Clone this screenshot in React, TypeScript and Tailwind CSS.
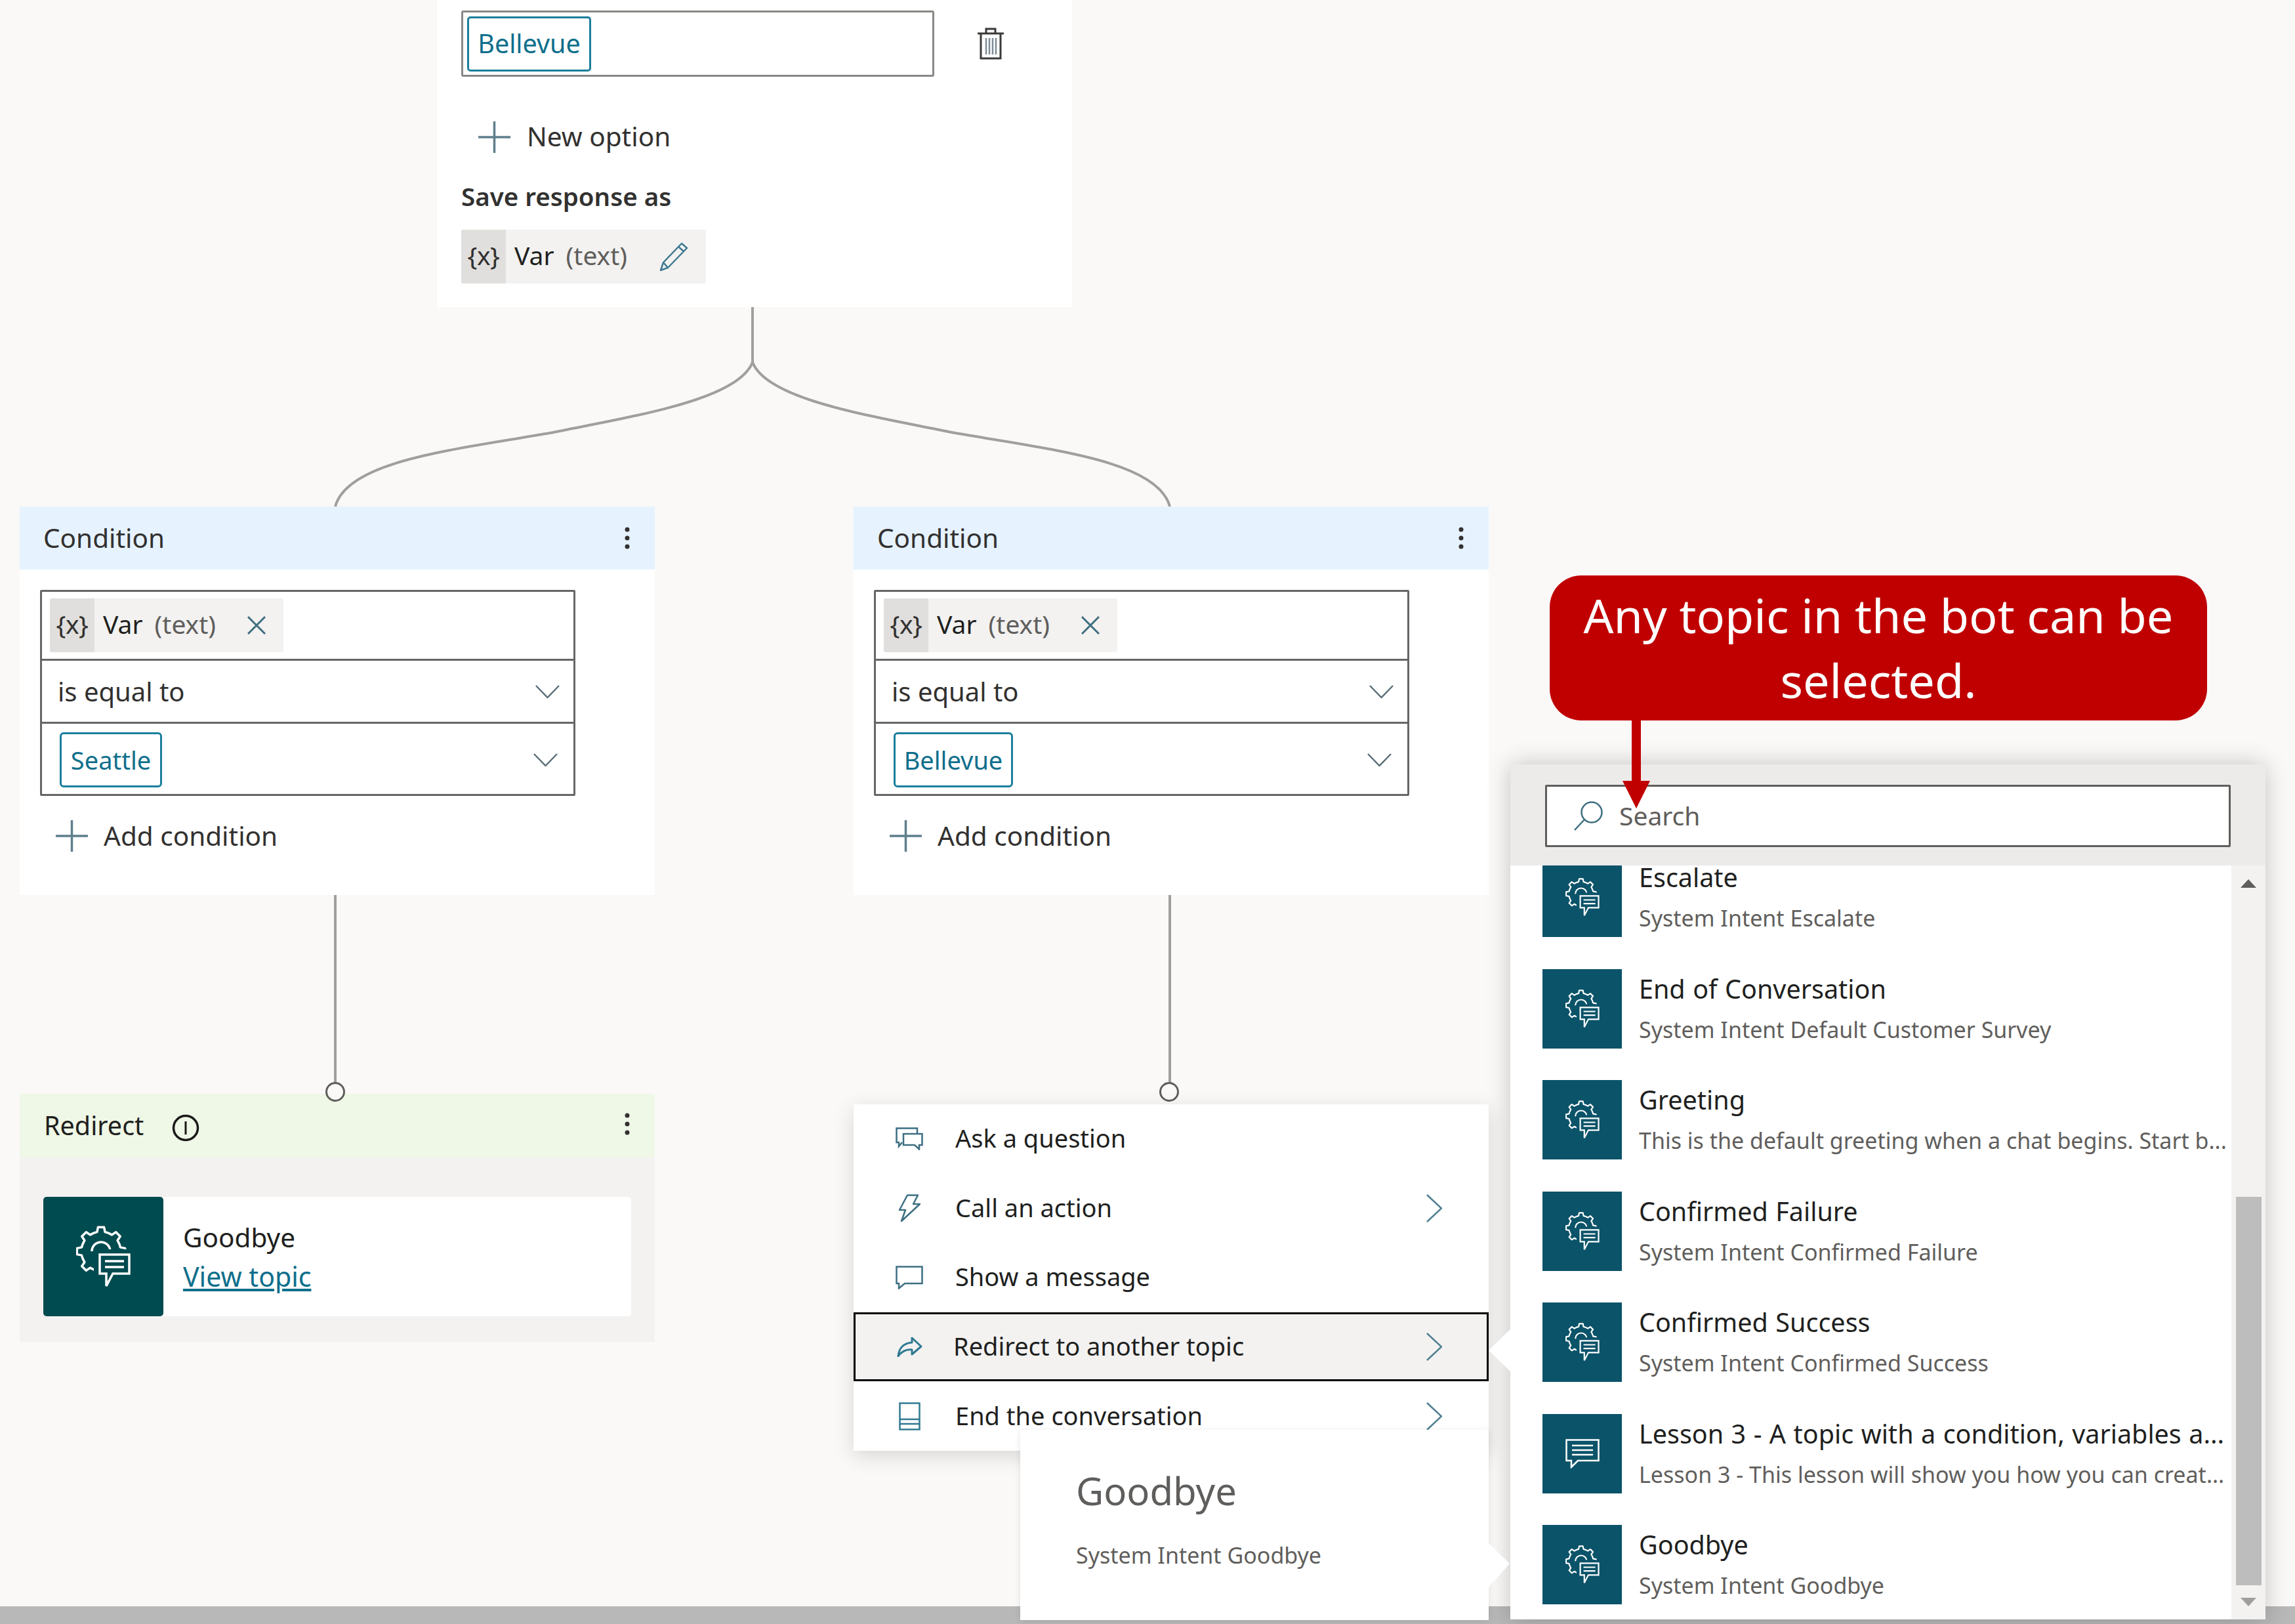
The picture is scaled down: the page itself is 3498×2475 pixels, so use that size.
import React from "react";

const FONT = "font-['Noto_Sans','Open_Sans',sans-serif]";

function gearPath(cx: number, cy: number, rOut: number, rIn: number, teeth: number) {
  const pts: string[] = [];
  const step = (Math.PI * 2) / teeth;
  for (let i = 0; i < teeth; i++) {
    const a = i * step - Math.PI / 2;
    const seq: [number, number][] = [
      [rIn, a - step * 0.42],
      [rIn, a - step * 0.26],
      [rOut, a - step * 0.16],
      [rOut, a + step * 0.16],
      [rIn, a + step * 0.26],
      [rIn, a + step * 0.42],
    ];
    seq.forEach(([r, t]) => {
      pts.push(`${(cx + r * Math.cos(t)).toFixed(1)} ${(cy + r * Math.sin(t)).toFixed(1)}`);
    });
  }
  return "M" + pts.join("L") + "Z";
}

function GearChat({ w, h, bg, sw }: { w: number; h: number; bg: string; sw: number }) {
  return (
    <svg width={w} height={h} viewBox="0 0 83 95" fill="none" stroke="white" strokeWidth={sw}>
      <path d={gearPath(38, 39, 37, 30, 8)} strokeLinejoin="round" />
      <path d="M24 39a14 14 0 0 1 28 0" />
      <rect x="27" y="36" width="60" height="60" fill={bg} stroke="none" />
      <path d="M36 44H81V73H56L46 92V73H36Z" strokeLinejoin="miter" />
      <path d="M44 54H73M44 63H73" />
    </svg>
  );
}

function ChatIcon() {
  return (
    <svg width="52" height="45" viewBox="0 0 52 45" fill="none" stroke="white" strokeWidth="2.5">
      <path d="M1.5 1.5H50.5V33H19L9 43V33H1.5Z" />
      <path d="M10 10H42M10 17H42M10 24H42" />
    </svg>
  );
}

function Plus() {
  return (
    <svg width="49" height="48" viewBox="0 0 49 48" stroke="#5f7f8c" strokeWidth="3.5" className="shrink-0">
      <path d="M0 24H49M24.5 0V48" />
    </svg>
  );
}

function Chevron() {
  return (
    <svg width="37" height="20" viewBox="0 0 37 20" fill="none" stroke="#5a6f78" strokeWidth="2.5">
      <path d="M1 1L18.5 19L36 1" />
    </svg>
  );
}

function ChevronRight() {
  return (
    <svg width="24" height="43" viewBox="0 0 24 43" fill="none" stroke="#4f7f90" strokeWidth="2.5">
      <path d="M1 1L23 21.5L1 42" />
    </svg>
  );
}

function Dots() {
  return (
    <svg width="8" height="34" viewBox="0 0 8 34" fill="#323130">
      <circle cx="4" cy="4" r="3.5" />
      <circle cx="4" cy="17" r="3.5" />
      <circle cx="4" cy="30" r="3.5" />
    </svg>
  );
}

function VarChip({ wide, icon }: { wide: string; icon: React.ReactNode }) {
  return (
    <div className={`flex items-stretch bg-[#f3f2f1] rounded-[3px] h-[82px] text-[39px] ${wide}`}>
      <div className="w-[68px] bg-[#e1dfdd] flex items-center justify-center text-[#323130] rounded-l-[3px] tracking-[-0.5px] pb-[4px]">{"{x}"}</div>
      <div className="flex items-center flex-1 pl-[13px] pr-[27px]">
        <span className="text-[#201f1e] pb-[4px]">Var</span>
        <span className="ml-[18px] text-[#605e5c] pb-[4px]">(text)</span>
        <span className="ml-auto flex">{icon}</span>
      </div>
    </div>
  );
}

function XIcon() {
  return (
    <svg width="28" height="28" viewBox="0 0 28 28" stroke="#3f6f80" strokeWidth="3">
      <path d="M1 1L27 27M27 1L1 27" />
    </svg>
  );
}

function ConditionCard({ pos, value, chipW }: { pos: string; value: string; chipW: string }) {
  return (
    <div className={`absolute ${pos} top-[772px] w-[968px] h-[592px] bg-white flex flex-col text-[40.5px]`}>
      <div className="h-[96px] bg-[#e6f3ff] flex items-center pl-[36px] pr-[38px] justify-between">
        <span className="text-[#323130]">Condition</span>
        <Dots />
      </div>
      <div className="ml-[31px] mt-[31px] w-[816px] h-[314px] border-[3px] border-[#666666] rounded-[2px] flex flex-col">
        <div className="h-[105px] flex items-center pl-[12px] border-b-[3px] border-[#666666]">
          <VarChip wide="w-[356px]" icon={<XIcon />} />
        </div>
        <div className="h-[96px] flex items-center justify-between pl-[24px] pr-[21px] border-b-[3px] border-[#666666]">
          <span className="text-[#323130] text-[40px]">is equal to</span>
          <Chevron />
        </div>
        <div className="flex-1 flex items-center justify-between pl-[27px] pr-[24px] pt-[3px]">
          <div className={`h-[84px] ${chipW} border-[3px] border-[#1b7f9c] rounded-[6px] flex items-center justify-center text-[#0f6f8c] text-[38px]`}>{value}</div>
          <Chevron />
        </div>
      </div>
      <div className="ml-[55px] mt-[37px] flex items-center h-[48px] gap-[24px]">
        <Plus />
        <span className="text-[#323130]">Add condition</span>
      </div>
    </div>
  );
}

function AskIcon() {
  return (
    <svg width="42" height="35" viewBox="0 0 42 35" fill="none" stroke="#3d6f82" strokeWidth="2.5">
      <path d="M33 9V1.5H1.5V23H5V29L10 23" />
      <path d="M12 10H40.5V27H36V33.5L29 27H12Z" />
    </svg>
  );
}
function BoltIcon() {
  return (
    <svg width="34" height="42" viewBox="0 0 34 42" fill="none" stroke="#3d6f82" strokeWidth="2.5" strokeLinejoin="round">
      <path d="M14 1.5H30L23 15H33L5 41L11 24H2Z" />
    </svg>
  );
}
function MsgIcon() {
  return (
    <svg width="42" height="36" viewBox="0 0 42 36" fill="none" stroke="#3d6f82" strokeWidth="2.5">
      <path d="M1.5 1.5H40.5V27H14L5 34.5V27H1.5Z" />
    </svg>
  );
}
function ShareIcon() {
  return (
    <svg width="39" height="31" viewBox="0 0 39 31" fill="none" stroke="#2f7a92" strokeWidth="3" strokeLinejoin="round">
      <path d="M23 2L37 15L23 27V20C13 19 7 23 2 30C3 18 10 10 23 9Z" />
    </svg>
  );
}
function EndIcon() {
  return (
    <svg width="33" height="43" viewBox="0 0 33 43" fill="none" stroke="#2f7a92" strokeWidth="2.5">
      <rect x="1.5" y="1.5" width="30" height="40" />
      <path d="M1.5 26H31.5M1.5 33H31.5" />
    </svg>
  );
}

function MenuRow({ icon, label, chevron, selected }: { icon: React.ReactNode; label: string; chevron?: boolean; selected?: boolean }) {
  return (
    <div className={`h-[105.6px] flex items-center ${selected ? "bg-[#f3f2f1] border-[3px] border-black pl-[61px] pr-[68px]" : "pl-[64px] pr-[71px]"}`}>
      <div className="w-[42px] flex justify-center">{icon}</div>
      <span className={`text-[#201f1e] pb-[2px] ${selected ? "ml-[46px]" : "ml-[49px]"}`}>{label}</span>
      {chevron && <span className="ml-auto flex"><ChevronRight /></span>}
    </div>
  );
}

function TopicRow({ title, sub, chat }: { title: string; sub: string; chat?: boolean }) {
  return (
    <div className="flex h-[121px] mb-[48.5px] whitespace-nowrap">
      <div className="w-[121px] h-[121px] bg-[#0b5369] flex items-center justify-center shrink-0">
        {chat ? <ChatIcon /> : <GearChat w={52} h={59} bg="#0b5369" sw={3.5} />}
      </div>
      <div className="ml-[26px]">
        <div className="leading-[60px] text-[39.5px] [word-spacing:1.2px] text-[#201f1e]">{title}</div>
        <div className="leading-[64px] text-[34px] text-[#605e5c]">{sub}</div>
      </div>
    </div>
  );
}

function Triangle({ up, color }: { up?: boolean; color: string }) {
  return (
    <svg width="24" height="13" viewBox="0 0 24 13" fill={color}>
      <path d={up ? "M12 0L24 13H0Z" : "M0 0H24L12 13Z"} />
    </svg>
  );
}

export default function App() {
  return (
    <div className={`relative w-[3498px] h-[2475px] overflow-hidden bg-[#faf9f8] text-[38px] ${FONT}`}>
      {/* bottom scroll bar */}
      <div className="absolute bottom-0 left-0 w-full h-[27px] bg-[#b8b8b8]" />

      {/* connectors */}
      <svg className="absolute left-0 top-0" width="3498" height="2475" fill="none" stroke="#a19f9d" strokeWidth="4">
        <path d="M1147 468V552C1125 610 960 635 848 658C700 685 530 700 511 772" />
        <path d="M1147 552C1169 610 1334 635 1446 658C1594 685 1764 700 1783 772" />
        <path d="M511 1364V1650M1783 1364V1650" />
      </svg>

      {/* question card */}
      <div className="absolute left-[666px] top-0 w-[968px] h-[468px] bg-white pl-[37px] flex flex-col text-[40.5px]">
        <div className="mt-[16px] flex items-center">
          <div className="w-[721px] h-[101px] border-[3px] border-[#8a8886] rounded-[3px] flex items-center pl-[6px]">
            <div className="h-[84px] w-[189px] border-[3px] border-[#1b7f9c] rounded-[5px] flex items-center justify-center text-[#0f6f8c] text-[39.5px]">Bellevue</div>
          </div>
          <svg className="ml-[65px]" width="42" height="49" viewBox="0 0 42 49" fill="none" stroke="#3b3a39" strokeWidth="3">
            <path d="M1 9H41M14 9V2H28V9M6 9V47H36V9" />
            <path d="M14 16V41M19 16V41M24 16V41M29 16V41" stroke="#7d8c96" strokeWidth="2.5" />
          </svg>
        </div>
        <div className="mt-[68px] ml-[26px] flex items-center h-[48px] gap-[25px]">
          <Plus />
          <span className="text-[#323130] pb-[2px]">New option</span>
        </div>
        <div className="mt-[33px] font-semibold text-[38.5px] text-[#323130] leading-[66px]">Save response as</div>
        <div className="mt-[18px]">
          <VarChip
            wide="w-[373px]"
            icon={
              <svg width="44" height="44" viewBox="0 0 44 44" fill="none" stroke="#3f7a90" strokeWidth="2.5" strokeLinejoin="round">
                <path d="M34 2L42 9L13 39L2 43L6 31Z M6 31L13 39 M29 7L37 14" />
              </svg>
            }
          />
        </div>
      </div>

      <ConditionCard pos="left-[30px]" value="Seattle" chipW="w-[156px]" />
      <ConditionCard pos="left-[1301px]" value="Bellevue" chipW="w-[182px]" />

      {/* redirect card */}
      <div className="absolute left-[30px] top-[1667px] w-[968px] h-[378px] bg-[#f3f2f1] flex flex-col text-[40.5px]">
        <div className="h-[97px] bg-[#eff7e6] flex items-center pl-[37px] pr-[38px]">
          <span className="text-[#201f1e] text-[39.5px]">Redirect</span>
          <svg className="ml-[43px] mt-[7px]" width="42" height="42" viewBox="0 0 42 42" fill="none" stroke="#1b1a19" strokeWidth="3.5">
            <circle cx="21" cy="21" r="18.5" />
            <path d="M21 11V31" strokeWidth="3" />
          </svg>
          <span className="ml-auto flex -mt-[5px]"><Dots /></span>
        </div>
        <div className="mt-[60px] ml-[36px] w-[896px] h-[182px] bg-white rounded-[5px] flex">
          <div className="w-[183px] bg-[#004b50] rounded-[5px] flex items-center justify-center">
            <GearChat w={83} h={95} bg="#004b50" sw={3.5} />
          </div>
          <div className="ml-[30px] flex flex-col justify-center">
            <span className="text-[#201f1e] leading-[60px]">Goodbye</span>
            <span className="text-[#0f6f8c] text-[41px] underline leading-[58px]">View topic</span>
          </div>
        </div>
      </div>

      {/* connector circles */}
      <div className="absolute left-[496px] top-[1649px] w-[30px] h-[30px] rounded-full border-[3px] border-[#605e5c] bg-[#faf9f8]" />
      <div className="absolute left-[1767px] top-[1649px] w-[30px] h-[30px] rounded-full border-[3px] border-[#605e5c] bg-[#faf9f8]" />

      {/* add node menu */}
      <div className="absolute left-[1301px] top-[1683px] w-[968px] h-[528px] bg-white shadow-[0_8px_30px_rgba(0,0,0,0.14)]">
        <MenuRow icon={<AskIcon />} label="Ask a question" />
        <MenuRow icon={<BoltIcon />} label="Call an action" chevron />
        <MenuRow icon={<MsgIcon />} label="Show a message" />
        <MenuRow icon={<ShareIcon />} label="Redirect to another topic" chevron selected />
        <MenuRow icon={<EndIcon />} label="End the conversation" chevron />
      </div>

      {/* topic panel */}
      <div className="absolute left-[2302px] top-[1165px] w-[1151px] h-[1303px] bg-[#edebe9] rounded-t-[8px] shadow-[0_0_36px_rgba(0,0,0,0.22)] flex flex-col">
        <div className="h-[154px] shrink-0 pt-[31px] pl-[53px]">
          <div className="w-[1045px] h-[95px] bg-white border-[3px] border-[#605e5c] rounded-[2px] flex items-center pl-[40px]">
            <svg width="46" height="45" viewBox="0 0 46 45" fill="none" stroke="#3f6f80" strokeWidth="2.5">
              <circle cx="28" cy="17" r="15.5" />
              <path d="M17 28L2 44" />
            </svg>
            <span className="ml-[24px] text-[39px] text-[#605e5c]">Search</span>
          </div>
        </div>
        <div className="flex-1 flex min-h-0">
          <div className="w-[1099px] bg-white overflow-hidden pl-[49px]">
            <div className="-mt-[12px]">
              <TopicRow title="Escalate" sub="System Intent Escalate" />
              <TopicRow title="End of Conversation" sub="System Intent Default Customer Survey" />
              <TopicRow title="Greeting" sub="This is the default greeting when a chat begins. Start b..." />
              <TopicRow title="Confirmed Failure" sub="System Intent Confirmed Failure" />
              <TopicRow title="Confirmed Success" sub="System Intent Confirmed Success" />
              <TopicRow title="Lesson 3 - A topic with a condition, variables a..." sub="Lesson 3 - This lesson will show you how you can creat..." chat />
              <TopicRow title="Goodbye" sub="System Intent Goodbye" />
            </div>
          </div>
          <div className="w-[52px] bg-[#f3f2f1] flex flex-col items-center pt-[21px]">
            <Triangle up color="#605e5c" />
            <div className="mt-[471px] w-[39px] h-[592px] bg-[#bdbdbd]" />
            <div className="mt-[19px] flex"><Triangle color="#a19f9d" /></div>
          </div>
        </div>
      </div>

      {/* beak from panel to the selected row */}
      <svg className="absolute left-[2269px] top-[2026px]" width="34" height="64" viewBox="0 0 34 64" fill="white">
        <path d="M0 32L33 0V64Z" />
      </svg>

      {/* preview tooltip */}
      <div className="absolute left-[1555px] top-[2179px] w-[714px] h-[290px] bg-white shadow-[0_2px_10px_rgba(0,0,0,0.1)] pl-[85px]">
        <div className="mt-[60px] text-[58px] leading-[66px] text-[#605e5c]">Goodbye</div>
        <div className="mt-[40px] text-[34px] leading-[50px] text-[#605e5c]">System Intent Goodbye</div>
      </div>
      <svg className="absolute left-[2268px] top-[2351px]" width="34" height="69" viewBox="0 0 34 69" fill="white">
        <path d="M0 0L33 32L0 69Z" />
      </svg>

      {/* annotation */}
      <div className="absolute left-[2362px] top-[877px] w-[1002px] h-[221px] bg-[#c00000] rounded-[48px] flex items-center justify-center text-center text-white text-[72px] leading-[99px] pb-[2px]">
        Any topic in the bot can be
        <br />
        selected.
      </div>
      <svg className="absolute left-[2473px] top-[1098px]" width="42" height="134" viewBox="0 0 42 134" fill="#c00000">
        <path d="M14 0H28V92H42L21 134L0 92H14Z" />
      </svg>
    </div>
  );
}
